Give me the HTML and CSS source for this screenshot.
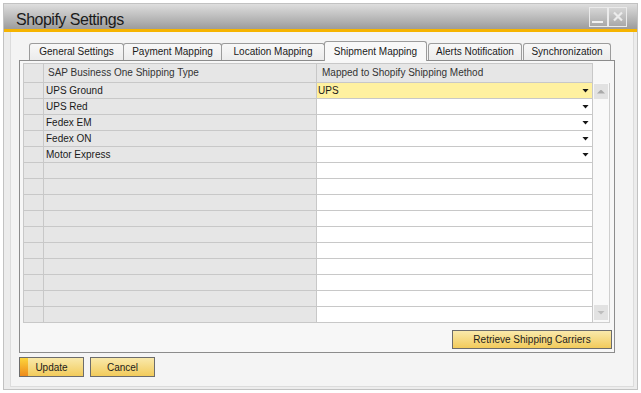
FILE: index.html
```html
<!doctype html>
<html>
  <head>
    <meta charset="utf-8">
    <title>Shopify Settings</title>
    <link rel="stylesheet" href="styles.css">
  </head>
  <body>
    <div class="window">
      <div class="titlebar">
        <span class="title">Shopify Settings</span>
        <div class="winbuttons">
          <span class="winbtn">
            <svg width="17" height="18" viewBox="0 0 17 18">
              <rect x="2" y="13" width="11" height="2" fill="#f2f2f2"/>
            </svg>
          </span>
          <span class="winbtn">
            <svg width="17" height="18" viewBox="0 0 17 18">
              <path d="M5 4.5 L13 12.5 M13 4.5 L5 12.5" stroke="#ececec" stroke-width="2.2"/>
            </svg>
          </span>
        </div>
      </div>
      <div class="accent"></div>

      <div class="content">
        <div class="tabs">
          <div class="tab">General Settings</div>
          <div class="tab">Payment Mapping</div>
          <div class="tab">Location Mapping</div>
          <div class="tab active">Shipment Mapping</div>
          <div class="tab">Alerts Notification</div>
          <div class="tab">Synchronization</div>
        </div>

        <div class="panel">
          <div class="grid">
            <div class="cell rowhead top"></div>
            <div class="cell head">SAP Business One Shipping Type</div>
            <div class="cell head">Mapped to Shopify Shipping Method</div>
            <div class="nohead"></div>

            <div class="scroll">
              <div class="scrollbtn"><span class="tri up"></span></div>
              <div class="scrollbtn"><span class="tri down"></span></div>
            </div>

            <div class="cell rowhead"></div>
            <div class="cell">UPS Ground</div>
            <div class="cell value selected"><span>UPS</span><span class="arrow"></span></div>

            <div class="cell rowhead"></div>
            <div class="cell">UPS Red</div>
            <div class="cell value"><span></span><span class="arrow"></span></div>

            <div class="cell rowhead"></div>
            <div class="cell">Fedex EM</div>
            <div class="cell value"><span></span><span class="arrow"></span></div>

            <div class="cell rowhead"></div>
            <div class="cell">Fedex ON</div>
            <div class="cell value"><span></span><span class="arrow"></span></div>

            <div class="cell rowhead"></div>
            <div class="cell">Motor Express</div>
            <div class="cell value"><span></span><span class="arrow"></span></div>

            <div class="cell rowhead"></div><div class="cell"></div><div class="cell value"></div>
            <div class="cell rowhead"></div><div class="cell"></div><div class="cell value"></div>
            <div class="cell rowhead"></div><div class="cell"></div><div class="cell value"></div>
            <div class="cell rowhead"></div><div class="cell"></div><div class="cell value"></div>
            <div class="cell rowhead"></div><div class="cell"></div><div class="cell value"></div>
            <div class="cell rowhead"></div><div class="cell"></div><div class="cell value"></div>
            <div class="cell rowhead"></div><div class="cell"></div><div class="cell value"></div>
            <div class="cell rowhead"></div><div class="cell"></div><div class="cell value"></div>
            <div class="cell rowhead"></div><div class="cell"></div><div class="cell value"></div>
            <div class="cell rowhead"></div><div class="cell"></div><div class="cell value"></div>
          </div>

          <div class="panel-actions">
            <button class="btn retrieve">Retrieve Shipping Carriers</button>
          </div>
        </div>

        <div class="actions">
          <button class="btn primary">Update</button>
          <button class="btn">Cancel</button>
        </div>
      </div>
    </div>
  </body>
</html>
```

FILE: styles.css
```css
* {
  box-sizing: border-box;
}

html,
body {
  margin: 0;
  background: #fff;
}

body {
  font-family: "Liberation Sans", Arial, sans-serif;
  font-size: 10px;
  color: #1a1a1a;
}

.window {
  display: flex;
  flex-direction: column;
  width: 635px;
  height: 387px;
  margin: 3px 0 0 3px;
  border: 1px solid #c2c2c2;
  background: #ececec;
}

/* title bar */
.titlebar {
  display: flex;
  justify-content: space-between;
  height: 25px;
  padding: 0 10px 0 12px;
  background: linear-gradient(#dedede, #9c9c9c);
}

.title {
  margin-top: 8px;
  font-size: 16px;
  line-height: 16px;
  letter-spacing: -0.5px;
  color: #1b1b1b;
}

.winbuttons {
  display: flex;
  margin-top: 3px;
}

.winbtn {
  width: 19px;
  height: 20px;
  border: 1px solid #ebebeb;
  background: rgba(255, 255, 255, 0.06);
}

.winbtn svg {
  display: block;
}

.accent {
  height: 3px;
  background: #f6b400;
}

/* body */
.content {
  flex: 1;
  display: flex;
  flex-direction: column;
  margin: 0 3px 2px 6px;
  padding: 9px 0 0 8px;
  border: 1px solid #dcdcdc;
  border-top: 0;
  background: #f4f4f4;
}

.tabs {
  position: relative;
  z-index: 1;
  display: flex;
  align-items: flex-end;
  height: 19px;
  margin-left: 10px;
}

.tab {
  height: 17px;
  border: 1px solid #9c9c9c;
  border-bottom: 0;
  border-radius: 3px 3px 0 0;
  background: linear-gradient(#f8f8f8, #ebebeb);
  line-height: 16px;
  text-align: center;
  white-space: nowrap;
}

.tab.active {
  height: 20px;
  margin-bottom: -1px;
  padding-top: 2px;
  background: #f8f8f8;
}

.tab:nth-child(1) { width: 95px; }
.tab:nth-child(2) { width: 99px; margin-left: -1px; }
.tab:nth-child(3) { width: 104px; margin-left: -1px; }
.tab:nth-child(4) { width: 103px; margin-left: -1px; }
.tab:nth-child(5) { width: 94px; margin-left: 1px; }
.tab:nth-child(6) { width: 88px; margin-left: 1px; }

.panel {
  width: 596px;
  padding: 2px 2px 3px 3px;
  border: 1px solid #8c8c8c;
  background: #f7f7f7;
}

/* matrix */
.grid {
  display: grid;
  grid-template-columns: 21px 273px 276px 17px;
  grid-template-rows: 20px repeat(15, 16px);
}

.cell {
  overflow: hidden;
  padding-left: 2px;
  border-right: 1px solid #c8c8c8;
  border-bottom: 1px solid #c8c8c8;
  background: #e6e6e6;
  line-height: 15px;
  white-space: nowrap;
}

.rowhead {
  border-left: 1px solid #c8c8c8;
}

.top,
.head {
  border-top: 1px solid #c8c8c8;
}

.head {
  padding-left: 4px;
  line-height: 18px;
  color: #333;
}

.head + .head {
  padding-left: 5px;
}

.value {
  display: flex;
  align-items: center;
  justify-content: space-between;
  padding: 0 3px 0 1px;
  background: #fff;
}

.value.selected {
  background: #fff1a0;
}

.arrow {
  width: 7px;
  height: 4px;
  background: #161616;
  clip-path: polygon(0 0, 100% 0, 50% 100%);
}

.scroll {
  grid-column: 4;
  grid-row: 2 / span 15;
  display: flex;
  flex-direction: column;
  justify-content: space-between;
  padding: 1px 1px 2px 1px;
  border-right: 1px solid #cfcfcf;
  border-bottom: 1px solid #cfcfcf;
  background: #f9f9f9;
}

.scrollbtn {
  display: flex;
  align-items: center;
  justify-content: center;
  height: 15px;
  background: #e2e2e2;
}

.tri {
  width: 8px;
  height: 4px;
  background: #a9a9a9;
}

.tri.up {
  clip-path: polygon(50% 0, 100% 100%, 0 100%);
}

.tri.down {
  background: #bdbdbd;
  clip-path: polygon(0 0, 100% 0, 50% 100%);
}

/* buttons */
.panel-actions {
  display: flex;
  justify-content: flex-end;
  margin-top: 7px;
}

.btn {
  width: 65px;
  height: 20px;
  padding: 0;
  border: 1px solid #6c6c6c;
  background: linear-gradient(#f9e9ab, #f2cb5b);
  font: inherit;
  color: #1c1c1c;
}

.btn.retrieve {
  width: 160px;
  height: 19px;
}

.btn.primary {
  background: linear-gradient(#fcd53c, #ee8a1a) no-repeat left top / 8px 100%,
              linear-gradient(#f9e9ab, #f2cb5b);
}

.actions {
  display: flex;
  gap: 6px;
  margin-top: 4px;
}
```
